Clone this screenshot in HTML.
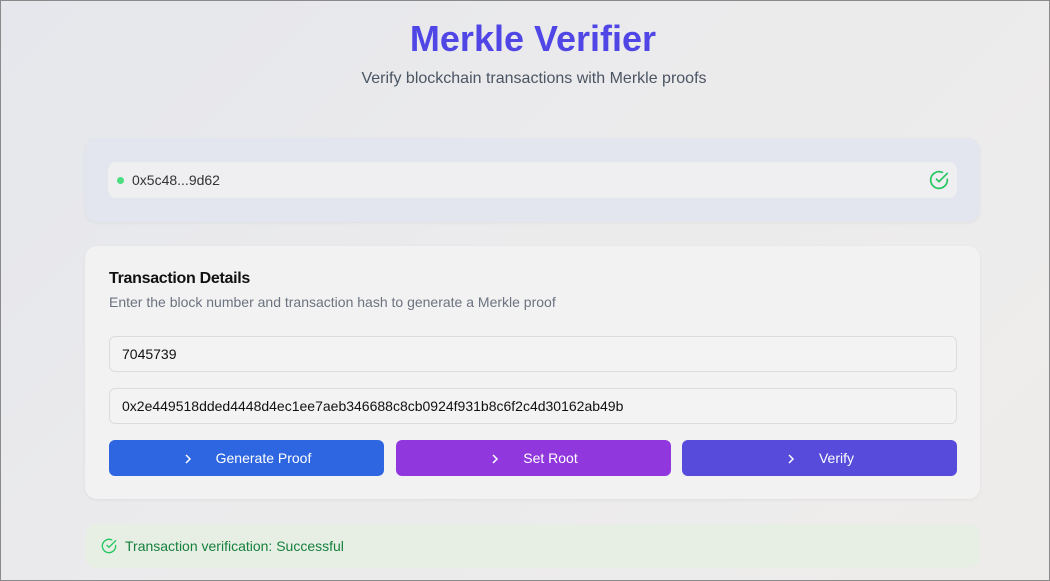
<!DOCTYPE html>
<html><head><style>
*{box-sizing:border-box;margin:0;padding:0}
body{width:1050px;height:581px;overflow:hidden;font-family:"Liberation Sans",sans-serif;background:linear-gradient(135deg,#e5e7ec 0%,#ecebec 50%,#eeeceb 100%);border:1px solid #8a8a8a;position:relative}
h1{position:absolute;top:17px;left:14px;width:1036px;text-align:center;font-size:36px;font-weight:700;color:#4f46e5}
.sub{position:absolute;top:69px;left:15px;width:1036px;text-align:center;font-size:16px;color:#4b5563}
.card{position:absolute;left:84px;width:895px;border-radius:12px}
.c1{top:137px;height:84px;background:#e3e5ef;box-shadow:0 1px 3px rgba(0,0,0,.05)}
.addr{position:absolute;left:23px;top:24px;width:849px;height:36px;background:#efeff1;border-radius:8px;font-size:14px;color:#333;line-height:36px;padding-left:24px}
.dot{position:absolute;left:9px;top:15px;width:7px;height:7px;border-radius:50%;background:#4ade80}
.c2{top:245px;height:253px;background:#f3f2f2;box-shadow:0 1px 3px rgba(0,0,0,.06)}
.t{position:absolute;left:24px;top:24px;font-size:16px;font-weight:700;color:#111;letter-spacing:-0.3px}
.d{position:absolute;left:24px;top:48px;font-size:14px;color:#6b7280}
.in{position:absolute;left:24px;width:848px;height:36px;border:1px solid #dcdcdf;border-radius:6px;background:#f3f3f4;font-size:14px;line-height:34px;padding-left:12px;color:#111}
.b{position:absolute;top:194px;height:36px;width:275px;border-radius:6px;color:#fff;font-size:14px;line-height:36px;text-align:center}
.b svg{vertical-align:-2px;margin-right:22px}
.c3{top:523px;height:44px;background:#e7efe5;font-size:14px;color:#15803d;line-height:44px;padding-left:40px}
</style></head><body>
<h1>Merkle Verifier</h1>
<div class="sub">Verify blockchain transactions with Merkle proofs</div>
<div class="card c1"><div class="addr"><div class="dot"></div>0x5c48...9d62
<svg style="position:absolute;right:8px;top:8px" width="20" height="20" viewBox="0 0 24 24" fill="none" stroke="#22c55e" stroke-width="2" stroke-linecap="round" stroke-linejoin="round"><path d="M22 11.1V12a10 10 0 1 1-5.9-9.1"/><path d="M22 4 12 14l-3-3"/></svg></div></div>
<div class="card c2">
<div class="t">Transaction Details</div>
<div class="d">Enter the block number and transaction hash to generate a Merkle proof</div>
<div class="in" style="top:90px">7045739</div>
<div class="in" style="top:142px">0x2e449518dded4448d4ec1ee7aeb346688c8cb0924f931b8c6f2c4d30162ab49b</div>
<div class="b" style="left:24px;background:#2d66e0"><svg width="12" height="12" viewBox="0 0 12 12" fill="none" stroke="#fff" stroke-width="1.5"><path d="M4 2l4 4-4 4"/></svg>Generate Proof</div>
<div class="b" style="left:311px;background:#9137de"><svg width="12" height="12" viewBox="0 0 12 12" fill="none" stroke="#fff" stroke-width="1.5"><path d="M4 2l4 4-4 4"/></svg>Set Root</div>
<div class="b" style="left:597px;background:#564bda"><svg width="12" height="12" viewBox="0 0 12 12" fill="none" stroke="#fff" stroke-width="1.5"><path d="M4 2l4 4-4 4"/></svg>Verify</div>
</div>
<div class="card c3"><svg style="position:absolute;left:16px;top:14px" width="16" height="16" viewBox="0 0 24 24" fill="none" stroke="#22c55e" stroke-width="2" stroke-linecap="round" stroke-linejoin="round"><path d="M22 11.1V12a10 10 0 1 1-5.9-9.1"/><path d="M22 4 12 14l-3-3"/></svg>Transaction verification: Successful</div>
</body></html>
